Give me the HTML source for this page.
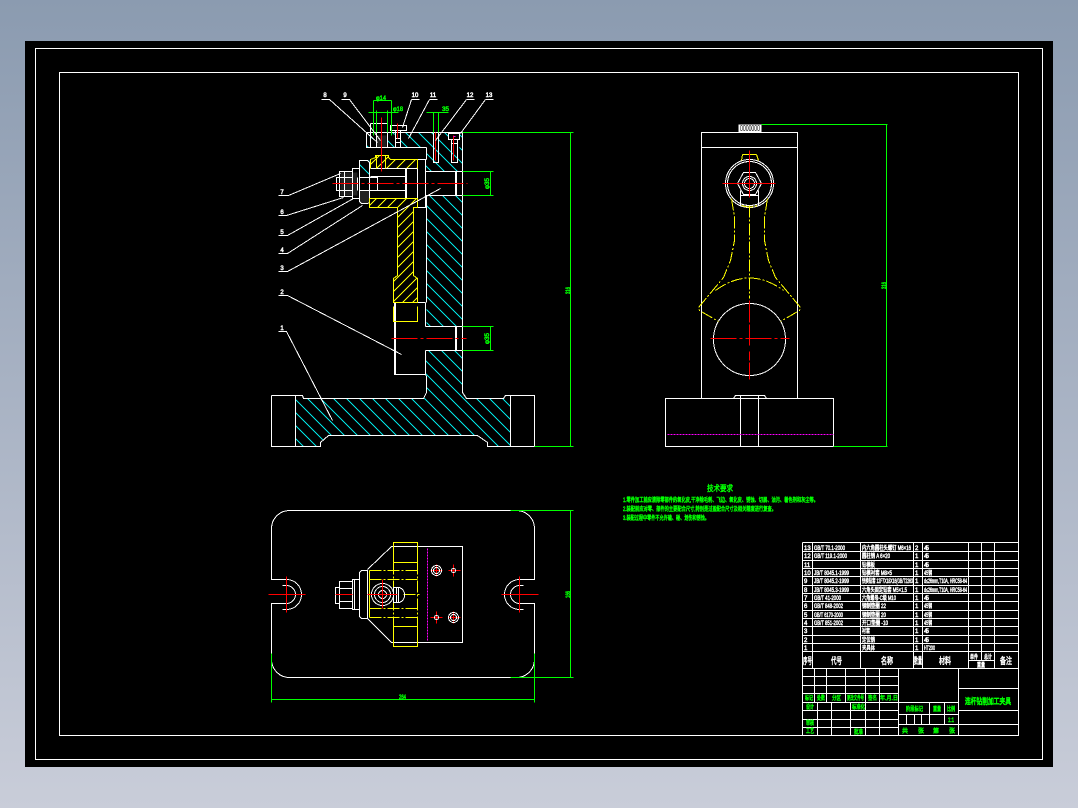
<!DOCTYPE html>
<html><head><meta charset="utf-8"><title>CAD</title>
<style>
html,body{margin:0;padding:0;width:1078px;height:808px;overflow:hidden;background:linear-gradient(180deg,#8b9bb0 0%,#a9b3c4 50%,#c9cdd9 100%)}
svg{position:absolute;left:0;top:0}
.l{fill:none;stroke:#fff;stroke-width:1}
.y{fill:none;stroke:#ff0;stroke-width:1}
.yd{fill:none;stroke:#ff0;stroke-width:1;stroke-dasharray:12 2 2 2}
.r{fill:none;stroke:#f00;stroke-width:1}
.rd{fill:none;stroke:#f00;stroke-width:1;stroke-dasharray:26 3 3 3}
.g{fill:none;stroke:#0f0;stroke-width:1}
.m{fill:none;stroke:#f0f;stroke-width:1;stroke-dasharray:2 1}
text{font-family:"Liberation Sans","Noto Sans CJK SC",sans-serif;shape-rendering:auto}
.tw{fill:#fff;stroke:#fff;stroke-width:.45;font-size:6px}
.th{fill:#fff;stroke:#fff;stroke-width:.55;font-size:9px}
.tg{fill:#0f0;stroke:#0f0;stroke-width:.5;font-size:6px}
.tn{fill:#fff;stroke:#fff;stroke-width:.5;font-size:6px;text-anchor:middle}
</style></head><body>
<svg width="1078" height="808" viewBox="0 0 1078 808" shape-rendering="crispEdges" xmlns="http://www.w3.org/2000/svg">
<defs>
<clipPath id="cc"><path d="M295 395H302L303 398H423L426 392V376L425 375V350H462V392L466 398H503L505 395H510V446H487V442L477 435H328L320 442V446H295Z"/><path d="M426 195H462V326H426Z"/><path d="M426 147H462V171H425V159H426Z"/><path d="M400 132H433V147H400ZM438 132H448V147H438ZM459 132H462V147H459ZM366 133H372V147H366ZM387 132H394V147H387Z"/><path d="M359 160H369V176H359Z"/></clipPath>
<clipPath id="cy"><path d="M370 159L375 155V155H388L390 159H417V168H370Z"/><path d="M369 198H417V207H413V275L417 278V302H393V278L397 275V207L369 207Z"/></clipPath>
</defs>
<rect x="25" y="41" width="1028" height="726" fill="#000"/>
<g transform="translate(.5 .5)">
<rect class="l" x="35" y="48" width="1007" height="711"/>
<rect class="l" x="59" y="72" width="959" height="663"/>

<!-- FRONT VIEW hatch -->
<g clip-path="url(#cc)"><path fill="none" stroke="#00e4e4" d="M-26 130l320 320M-13 130l320 320M0 130l320 320M13 130l320 320M26 130l320 320M39 130l320 320M52 130l320 320M65 130l320 320M78 130l320 320M91 130l320 320M104 130l320 320M117 130l320 320M130 130l320 320M143 130l320 320M156 130l320 320M169 130l320 320M182 130l320 320M195 130l320 320M208 130l320 320M221 130l320 320M234 130l320 320M247 130l320 320M260 130l320 320M273 130l320 320M286 130l320 320M299 130l320 320M312 130l320 320M325 130l320 320M338 130l320 320M351 130l320 320M364 130l320 320M377 130l320 320M390 130l320 320M403 130l320 320M416 130l320 320M429 130l320 320M442 130l320 320M455 130l320 320M468 130l320 320M481 130l320 320M494 130l320 320M507 130l320 320"/></g>
<g clip-path="url(#cy)"><path fill="none" stroke="#ff0" d="M374 150l-160 160M384 150l-160 160M394 150l-160 160M404 150l-160 160M414 150l-160 160M424 150l-160 160M434 150l-160 160M444 150l-160 160M454 150l-160 160M464 150l-160 160M474 150l-160 160M484 150l-160 160M494 150l-160 160M504 150l-160 160M514 150l-160 160M524 150l-160 160M534 150l-160 160M544 150l-160 160M554 150l-160 160M564 150l-160 160"/></g>
<rect x="340" y="172" width="17" height="23" fill="#222"/>
<rect x="359" y="190" width="10" height="13" fill="#222"/>
<rect x="376" y="135" width="10" height="12" fill="#222"/>

<!-- base and body -->
<path class="l" d="M271 395H302L303 398H423L426 392V376L425 374V350M425 326V302M426 302V195M425 195V171M426 159V147M462 132V392L466 398H503L505 395H534V446H487V442L477 435H328L320 442V446H271V395"/>
<path class="l" d="M295 395V446M510 395V446"/>
<path class="l" d="M366 132H462M366 132V147H426M394 302H425M394 302V374H425M395 302V374M425 326H462M425 350H462M455 326V350M456 326V350M425 171H462M425 195H462M455 171V195M456 171V195"/>
<path class="l" d="M425 159V207H417M417 159V207M417 159H426M405 168V198M406 168V198M370 168H417M369 198H417M370 176H405M370 190H405M359 177H377V190H359M357 177V190M352 168V198H359V168ZM359 160H367L369 162V202L367 203H361L359 201V162ZM339 171H352V196H339ZM336 177H339V190H336ZM344 171V196M339 177H352M339 190H352"/>
<!-- top clamp bits -->
<path class="l" d="M370 123H387V147M370 123V147M376 123V147M381 123V147M370 132H387M390 125H406V130H390ZM395 130V147H400V130ZM395 138H400M395 142H400"/>
<path class="l" d="M433 132V162H438V132M448 133H459V139H448ZM451 139V162H457V139M451 162H457M433 162H438M451 143H457"/>
<!-- yellow outlines -->
<path class="y" d="M370 168V159L375 157V155H388V157L390 159H417V168M369 198V207H397V248L397 275L393 278V302H417V278L413 275V207H417V198H369M393 306V321H417V306"/>
<path class="y" d="M376 155V168M381 155V168M385 155V168"/>
<!-- red -->
<path class="rd" d="M332 183H467"/>
<path class="rd" d="M391 338H466"/>
<path class="r" d="M381 117V171M397 123V138M435 132V160M453 135V160"/>
<path d="M453 136H455" stroke="#f0f" fill="none"/>
<!-- green dims -->
<path class="g" d="M373 100H391M373 100V135M391 100V135M368 112H398M376 110V132M387 110V132M426 112H448M433 112V132M438 112V132"/>
<path class="g" d="M462 171H493M462 195H493M490 171V195M462 326H493M462 350H493M490 326V350M462 132H573M570 132V446M534 446H573"/>
<!-- leaders -->
<path class="l" d="M321 99H329L377 142M341 99H349L380 140M411 99H419M411 99L402 127M429 99H437M429 99L408 138M466 99H474M466 99L435 140M485 99H493M485 99L460 133"/>
<path class="l" d="M278 195H288L340 173M278 215H286L343 197M278 235H287L353 198M278 253H287L362 205M278 271H287L440 188M278 295H287L401 354M278 331H286L332 420"/>

<!-- RIGHT VIEW -->
<rect class="l" x="701" y="132" width="96" height="266"/>
<path class="l" d="M701 147H797"/>
<path class="l" d="M665 398H733L735 395H764L766 398H833V446H665ZM740 395V446M758 395V446"/>
<rect x="738" y="124" width="23" height="8" fill="#fff"/>
<circle class="l" cx="749" cy="339" r="36"/>
<circle class="l" cx="749" cy="183" r="24"/>
<circle class="l" cx="749" cy="183" r="22"/>
<circle class="l" cx="749" cy="183" r="7"/>
<circle class="l" cx="749" cy="183" r="5"/>
<path class="l" d="M743 172H755L761 183L755 194H743L737 183Z"/>
<path class="l" d="M740 190V205M758 190V205M740 195H758"/>
<path class="y" d="M742 154H756M742 154L741 160M756 154L758 160"/>
<path class="yd" d="M731 198L734 217V240L730 260L723 277L698 307L699 310L718 321M767 198L764 217V240L768 260L775 277L800 307L799 310L780 321"/>
<path class="yd" d="M715 290Q749 265 783 290"/>
<path class="yd" d="M741 205Q749 208 757 205"/>
<path class="rd" d="M710 338H789"/>
<path class="r" d="M749 150V197M749 300V322M749 324V345M749 351V360M749 362V379"/>
<path class="r" d="M722 183H775"/>
<path class="yd" d="M749 205V298"/>
<path class="m" d="M667 434H833"/>
<path class="g" d="M761 124H887M886 124V446M833 446H887"/>

<!-- TOP VIEW -->
<path class="l" d="M289 510H516A18 18 0 0 1 534 528V579H519A15 15 0 0 0 519 609H523M523 585H519A9 9 0 0 0 519 603H534V660A18 18 0 0 1 516 677H289A18 18 0 0 1 271 660V603H286A9 9 0 0 0 286 585H282M282 609H286A15 15 0 0 0 286 579H271V528A18 18 0 0 1 289 510"/>
<path class="l" d="M367 569L391 546H462V642H391L367 618"/>
<path class="l" d="M367 570V618H361L359 616V572L361 570ZM352 579H359V609H352ZM354 579V609M339 581H352V608H339ZM339 588H352M339 601H352M335 587H339V603H335Z"/>
<rect x="393" y="542" width="24" height="20" class="y"/>
<rect x="393" y="626" width="24" height="20" class="y"/>
<path class="y" d="M369 570V617"/>
<path class="yd" d="M369 570H417M369 579H417M369 608H417M369 617H417"/>
<path class="yd" d="M393 562V626M417 562V626"/>
<path class="yd" d="M403 594H421"/>
<path class="m" d="M427 548V640"/>
<circle class="l" cx="382" cy="594" r="11"/>
<circle class="l" cx="382" cy="594" r="8"/>
<circle class="l" cx="382" cy="594" r="4"/>
<path class="l" d="M393 587H399A8 8 0 0 1 399 602H393ZM396 587V602M398 587V602"/>
<path class="r" d="M268 594H305M286 576V612M501 594H538M519 576V612"/>
<path class="r" d="M335 594H352M367 594H397M382 579V608M430 570H442M436 564V576M448 570H460M453 564V576M430 617H442M436 611V623M448 617H460M453 611V623"/>
<circle class="l" cx="436" cy="570" r="5"/><circle class="l" cx="436" cy="570" r="3"/>
<circle class="l" cx="453" cy="617" r="5"/><circle class="l" cx="453" cy="617" r="3"/>
<circle class="l" cx="453" cy="570" r="2"/><circle class="l" cx="436" cy="617" r="2"/>
<path class="g" d="M271 653V702M534 653V702M271 699H534M510 510H573M510 677H573M570 510V677"/>

<!-- TABLE -->
<path class="l" d="M802 542H1018M802 551H1018M802 560H1018M802 568H1018M802 576H1018M802 585H1018M802 593H1018M802 601H1018M802 610H1018M802 618H1018M802 626H1018M802 635H1018M802 643H1018M802 651H1018M802 668H1018"/>
<path class="l" d="M802 542V735M812 542V668M860 542V668M913 542V668M922 542V668M968 542V668M981 542V660M994 542V668M968 660H994"/>
<path class="l" d="M802 676H898M802 685H898M802 693H898M802 702H958M802 710H898M802 719H898M802 727H898M814 668V702M826 668V702M845 668V702M865 668V735M879 668V735M817 702V735M831 702V735M850 702V735M898 668V735M958 668V735M958 688H1018M958 710H1018M958 724H1018M898 714H958M898 724H958M929 702V724M944 702V714M906 714V724M914 714V724M921 714V724M944 714V724"/>
</g>

<!-- labels in front view -->
<text x="325" y="97" class="tn">8</text><text x="345" y="97" class="tn">9</text><text x="415" y="97" class="tn">10</text><text x="433" y="97" class="tn">11</text><text x="470" y="97" class="tn">12</text><text x="489" y="97" class="tn">13</text>
<text x="282" y="194" class="tn">7</text><text x="282" y="214" class="tn">6</text><text x="282" y="234" class="tn">5</text><text x="282" y="252" class="tn">4</text><text x="282" y="270" class="tn">3</text><text x="282" y="294" class="tn">2</text><text x="282" y="330" class="tn">1</text>
<text class="tg" x="376" y="100" textLength="10" lengthAdjust="spacingAndGlyphs">φ14</text>
<text class="tg" x="393" y="111" textLength="10" lengthAdjust="spacingAndGlyphs">φ18</text>
<text class="tg" x="442" y="111" textLength="7" lengthAdjust="spacingAndGlyphs">35</text>
<text class="tg" transform="translate(489 189) rotate(-90)" textLength="11" lengthAdjust="spacingAndGlyphs">φ35</text>
<text class="tg" transform="translate(489 344) rotate(-90)" textLength="11" lengthAdjust="spacingAndGlyphs">φ35</text>
<text class="tg" transform="translate(570 294) rotate(-90)" textLength="7" lengthAdjust="spacingAndGlyphs">316</text>
<text class="tg" transform="translate(886 289) rotate(-90)" textLength="7" lengthAdjust="spacingAndGlyphs">316</text>
<text class="tg" transform="translate(570 598) rotate(-90)" textLength="7" lengthAdjust="spacingAndGlyphs">166</text>
<text class="tg" x="399" y="699" textLength="7" lengthAdjust="spacingAndGlyphs">264</text>
<text x="740" y="131" style="fill:#000;font-size:8px" textLength="20" lengthAdjust="spacingAndGlyphs">0000000</text>

<!-- technical requirements -->
<text class="tg" x="707" y="491" style="font-size:8px" textLength="26" lengthAdjust="spacingAndGlyphs">技术要求</text>
<text class="tg" x="623" y="502" textLength="195" lengthAdjust="spacingAndGlyphs">1.零件加工前应清除零部件的氧化皮,干净除毛刺、飞边、氧化皮、锈蚀、切屑、油污、着色剂和灰尘等。</text>
<text class="tg" x="623" y="511" textLength="153" lengthAdjust="spacingAndGlyphs">2.装配前应对零、部件的主要配合尺寸,特别是过盈配合尺寸及相关精度进行复查。</text>
<text class="tg" x="623" y="520" textLength="86" lengthAdjust="spacingAndGlyphs">3.装配过程中零件不允许磕、碰、划伤和锈蚀。</text>

<!-- table text -->
<text class="tw" x="804" y="550">13</text><text class="tw" x="814" y="550" textLength="31" lengthAdjust="spacingAndGlyphs">GB/T 70.1-2000</text><text class="tw" x="862" y="550" textLength="49" lengthAdjust="spacingAndGlyphs">内六角圆柱头螺钉 M6×16</text><text class="tw" x="915" y="550">2</text><text class="tw" x="924" y="550" textLength="5">45</text>
<text class="tw" x="804" y="558">12</text><text class="tw" x="814" y="558" textLength="33" lengthAdjust="spacingAndGlyphs">GB/T 119.1-2000</text><text class="tw" x="862" y="558" textLength="28" lengthAdjust="spacingAndGlyphs">圆柱销 A 6×20</text><text class="tw" x="915" y="558">1</text><text class="tw" x="924" y="558" textLength="5">45</text>
<text class="tw" x="804" y="567">11</text><text class="tw" x="862" y="567" textLength="13" lengthAdjust="spacingAndGlyphs">钻模板</text><text class="tw" x="915" y="567">1</text><text class="tw" x="924" y="567" textLength="5">45</text>
<text class="tw" x="804" y="575">10</text><text class="tw" x="814" y="575" textLength="35" lengthAdjust="spacingAndGlyphs">JB/T 8045.1-1999</text><text class="tw" x="862" y="575" textLength="30" lengthAdjust="spacingAndGlyphs">钻模衬套 M8×5</text><text class="tw" x="915" y="575">1</text><text class="tw" x="924" y="575" textLength="8" lengthAdjust="spacingAndGlyphs">45钢</text>
<text class="tw" x="804" y="583">9</text><text class="tw" x="814" y="583" textLength="35" lengthAdjust="spacingAndGlyphs">JB/T 8045.2-1999</text><text class="tw" x="862" y="583" textLength="52" lengthAdjust="spacingAndGlyphs">快换钻套 12F7X18X16(GB/T2263)</text><text class="tw" x="915" y="583">1</text><text class="tw" x="924" y="583" textLength="43" lengthAdjust="spacingAndGlyphs">d≤26mm,T10A, HRC58-64</text>
<text class="tw" x="804" y="592">8</text><text class="tw" x="814" y="592" textLength="35" lengthAdjust="spacingAndGlyphs">JB/T 8045.3-1999</text><text class="tw" x="862" y="592" textLength="45" lengthAdjust="spacingAndGlyphs">六角头固定钻套 M5×1.5</text><text class="tw" x="915" y="592">1</text><text class="tw" x="924" y="592" textLength="43" lengthAdjust="spacingAndGlyphs">d≤26mm,T10A, HRC58-64</text>
<text class="tw" x="804" y="600">7</text><text class="tw" x="814" y="600" textLength="27" lengthAdjust="spacingAndGlyphs">GB/T 41-2000</text><text class="tw" x="862" y="600" textLength="34" lengthAdjust="spacingAndGlyphs">六角螺母-C级 M10</text><text class="tw" x="915" y="600">1</text><text class="tw" x="924" y="600" textLength="5">45</text>
<text class="tw" x="804" y="608">6</text><text class="tw" x="814" y="608" textLength="29" lengthAdjust="spacingAndGlyphs">GB/T 848-2002</text><text class="tw" x="862" y="608" textLength="24" lengthAdjust="spacingAndGlyphs">钢制垫圈 22</text><text class="tw" x="915" y="608">1</text><text class="tw" x="924" y="608" textLength="8" lengthAdjust="spacingAndGlyphs">45钢</text>
<text class="tw" x="804" y="617">5</text><text class="tw" x="814" y="617" textLength="29" lengthAdjust="spacingAndGlyphs">GB/T 6170-2000</text><text class="tw" x="862" y="617" textLength="24" lengthAdjust="spacingAndGlyphs">钢制垫圈 20</text><text class="tw" x="915" y="617">1</text><text class="tw" x="924" y="617" textLength="8" lengthAdjust="spacingAndGlyphs">45钢</text>
<text class="tw" x="804" y="625">4</text><text class="tw" x="814" y="625" textLength="29" lengthAdjust="spacingAndGlyphs">GB/T 851-2002</text><text class="tw" x="862" y="625" textLength="26" lengthAdjust="spacingAndGlyphs">开口垫圈 -10</text><text class="tw" x="915" y="625">1</text><text class="tw" x="924" y="625" textLength="8" lengthAdjust="spacingAndGlyphs">45钢</text>
<text class="tw" x="804" y="633">3</text><text class="tw" x="862" y="633" textLength="8" lengthAdjust="spacingAndGlyphs">衬套</text><text class="tw" x="915" y="633">1</text><text class="tw" x="924" y="633" textLength="5">45</text>
<text class="tw" x="804" y="642">2</text><text class="tw" x="862" y="642" textLength="13" lengthAdjust="spacingAndGlyphs">定位销</text><text class="tw" x="915" y="642">1</text><text class="tw" x="924" y="642" textLength="5">45</text>
<text class="tw" x="804" y="650">1</text><text class="tw" x="862" y="650" textLength="13" lengthAdjust="spacingAndGlyphs">夹具体</text><text class="tw" x="915" y="650">1</text><text class="tw" x="924" y="650" textLength="11" lengthAdjust="spacingAndGlyphs">HT200</text>
<text class="th" x="803" y="664" textLength="9" lengthAdjust="spacingAndGlyphs">序号</text><text class="th" x="831" y="664" textLength="11" lengthAdjust="spacingAndGlyphs">代号</text><text class="th" x="881" y="664" textLength="12" lengthAdjust="spacingAndGlyphs">名称</text><text class="th" x="914" y="664" textLength="8" lengthAdjust="spacingAndGlyphs">数量</text><text class="th" x="939" y="664" textLength="12" lengthAdjust="spacingAndGlyphs">材料</text>
<text class="tw" x="970" y="659" textLength="8" lengthAdjust="spacingAndGlyphs">单件</text><text class="tw" x="984" y="659" textLength="8" lengthAdjust="spacingAndGlyphs">总计</text><text class="tw" x="977" y="667" textLength="8" lengthAdjust="spacingAndGlyphs">重量</text><text class="th" x="1000" y="664" textLength="12" lengthAdjust="spacingAndGlyphs">备注</text>

<!-- title block green -->
<text class="tg" x="805" y="700" textLength="8" lengthAdjust="spacingAndGlyphs">标记</text><text class="tg" x="817" y="700" textLength="8" lengthAdjust="spacingAndGlyphs">处数</text><text class="tg" x="832" y="700" textLength="9" lengthAdjust="spacingAndGlyphs">分区</text><text class="tg" x="847" y="700" textLength="17" lengthAdjust="spacingAndGlyphs">更改文件号</text><text class="tg" x="868" y="700" textLength="9" lengthAdjust="spacingAndGlyphs">签名</text><text class="tg" x="880" y="700" textLength="18" lengthAdjust="spacingAndGlyphs">年.月.日</text>
<text class="tg" x="806" y="709" textLength="8" lengthAdjust="spacingAndGlyphs">设计</text><text class="tg" x="852" y="709" textLength="13" lengthAdjust="spacingAndGlyphs">标准化</text>
<text class="tg" x="806" y="725" textLength="8" lengthAdjust="spacingAndGlyphs">审核</text>
<text class="tg" x="806" y="733" textLength="8" lengthAdjust="spacingAndGlyphs">工艺</text><text class="tg" x="854" y="734" textLength="9" lengthAdjust="spacingAndGlyphs">批准</text>
<text class="tg" x="906" y="711" textLength="17" lengthAdjust="spacingAndGlyphs">阶段标记</text><text class="tg" x="933" y="711" textLength="8" lengthAdjust="spacingAndGlyphs">重量</text><text class="tg" x="947" y="711" textLength="8" lengthAdjust="spacingAndGlyphs">比例</text><text class="tg" x="948" y="722" textLength="6" lengthAdjust="spacingAndGlyphs">1:1</text>
<text class="tg" x="902" y="733">共</text><text class="tg" x="918" y="733">张</text><text class="tg" x="933" y="733">第</text><text class="tg" x="949" y="733">张</text>
<text class="tg" x="965" y="704" style="font-size:8px;stroke-width:.7" textLength="46" lengthAdjust="spacingAndGlyphs">连杆钻削加工夹具</text>
</svg>
</body></html>
